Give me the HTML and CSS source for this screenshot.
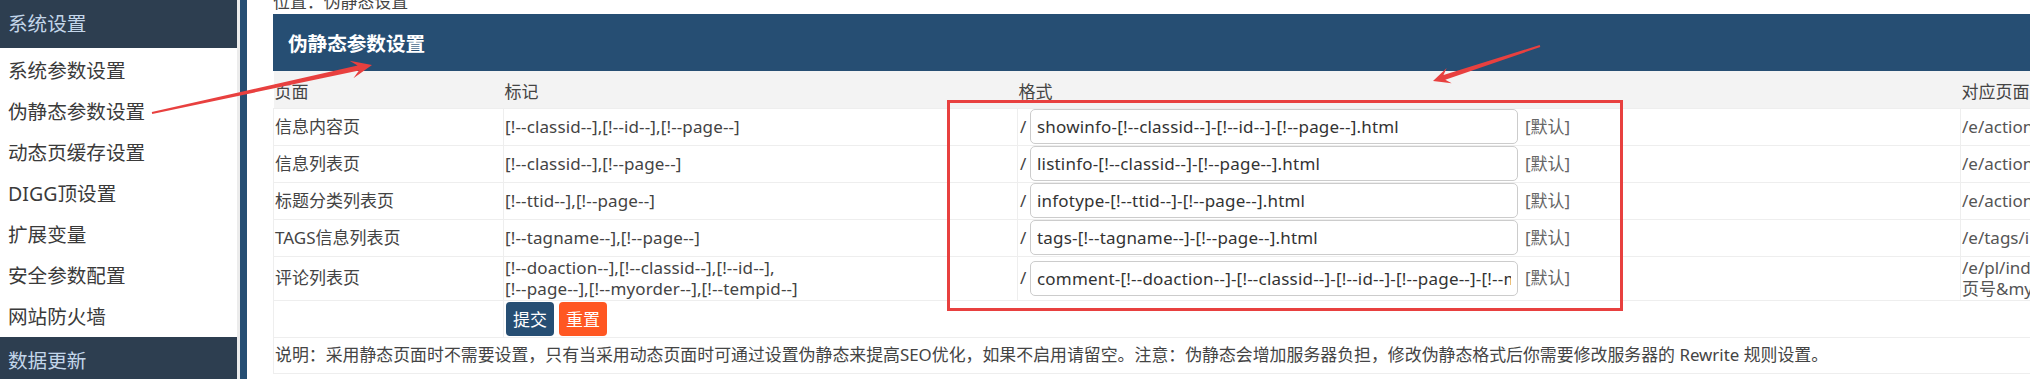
FILE: index.html
```html
<!DOCTYPE html>
<html lang="zh-CN">
<head>
<meta charset="utf-8">
<title>伪静态参数设置</title>
<link rel="stylesheet" href="styles.css">
</head>
<body>
<div class="layout">
  <aside class="sidebar">
    <div class="side-head">系统设置</div>
    <ul class="side-menu">
      <li>系统参数设置</li>
      <li>伪静态参数设置</li>
      <li>动态页缓存设置</li>
      <li>DIGG顶设置</li>
      <li>扩展变量</li>
      <li>安全参数配置</li>
      <li>网站防火墙</li>
    </ul>
    <div class="side-head">数据更新</div>
  </aside>
  <div class="gutter"></div>
  <div class="splitbar"></div>
  <main class="main">
    <div class="crumb">位置：伪静态设置</div>
    <div class="panel-head">伪静态参数设置</div>
    <table class="grid">
      <colgroup>
        <col class="c-page">
        <col class="c-tag">
        <col class="c-fmt">
        <col class="c-url">
      </colgroup>
      <thead>
        <tr><th>页面</th><th>标记</th><th>格式</th><th>对应页面</th></tr>
      </thead>
      <tbody>
        <tr>
          <td>信息内容页</td>
          <td class="tags">[!--classid--],[!--id--],[!--page--]</td>
          <td><div class="fmt-line"><span class="slash">/</span><input class="fmt" type="text" value="showinfo-[!--classid--]-[!--id--]-[!--page--].html"><span class="def">[默认]</span></div></td>
          <td class="url">/e/action/ShowInfo.php?classid=栏目ID&amp;id=信息ID&amp;page=分页号</td>
        </tr>
        <tr>
          <td>信息列表页</td>
          <td class="tags">[!--classid--],[!--page--]</td>
          <td><div class="fmt-line"><span class="slash">/</span><input class="fmt" type="text" value="listinfo-[!--classid--]-[!--page--].html"><span class="def">[默认]</span></div></td>
          <td class="url">/e/action/ListInfo/index.php?classid=栏目ID&amp;page=分页号</td>
        </tr>
        <tr>
          <td>标题分类列表页</td>
          <td class="tags">[!--ttid--],[!--page--]</td>
          <td><div class="fmt-line"><span class="slash">/</span><input class="fmt" type="text" value="infotype-[!--ttid--]-[!--page--].html"><span class="def">[默认]</span></div></td>
          <td class="url">/e/action/InfoType.php?ttid=标题分类ID&amp;page=分页号</td>
        </tr>
        <tr>
          <td>TAGS信息列表页</td>
          <td class="tags">[!--tagname--],[!--page--]</td>
          <td><div class="fmt-line"><span class="slash">/</span><input class="fmt" type="text" value="tags-[!--tagname--]-[!--page--].html"><span class="def">[默认]</span></div></td>
          <td class="url">/e/tags/index.php?tagname=TAGS名称&amp;page=分页号</td>
        </tr>
        <tr class="tall">
          <td>评论列表页</td>
          <td class="tags">[!--doaction--],[!--classid--],[!--id--],<br>[!--page--],[!--myorder--],[!--tempid--]</td>
          <td><div class="fmt-line"><span class="slash">/</span><input class="fmt" type="text" value="comment-[!--doaction--]-[!--classid--]-[!--id--]-[!--page--]-[!--myorder--]-[!--tempid--].html"><span class="def">[默认]</span></div></td>
          <td class="url">/e/pl/index.php?doaction=事件&amp;classid=栏目ID&amp;id=信息ID&amp;page=分<br>页号&amp;myorder=排序&amp;tempid=评论模板ID</td>
        </tr>
        <tr class="actions">
          <td></td>
          <td colspan="3"><div class="btn-line"><button class="btn btn-submit" type="button">提交</button><button class="btn btn-reset" type="button">重置</button></div></td>
        </tr>
        <tr class="note">
          <td colspan="4">说明：采用静态页面时不需要设置，只有当采用动态页面时可通过设置伪静态来提高SEO优化，如果不启用请留空。注意：伪静态会增加服务器负担，修改伪静态格式后你需要修改服务器的 Rewrite 规则设置。</td>
        </tr>
      </tbody>
    </table>
  </main>
</div>
<svg class="annot" width="2030" height="379" viewBox="0 0 2030 379">
  <rect x="948.5" y="101.5" width="673" height="208" fill="none" stroke="#e8403f" stroke-width="3"/>
  <polygon fill="#e8403f" points="151.8,112 357.6,65.5 349.6,60.7 372,65 353.4,78.3 359,70.5 152.2,114"/>
  <polygon fill="#e8403f" points="1539.7,45 1443.5,75 1446.7,68.1 1433,81 1451.7,83.3 1445.3,79.7 1540.3,47"/>
</svg>
</body>
</html>
```
FILE: styles.css
```css
html, body {
  margin: 0;
  padding: 0;
}
body {
  width: 2030px;
  height: 379px;
  overflow: hidden;
  position: relative;
  background: #fff;
  font-family: "Noto Sans", "Noto Sans CJK SC", sans-serif;
  color: #444;
}
.layout {
  display: flex;
  height: 379px;
}
.sidebar {
  flex: none;
  width: 237px;
  background: #fff;
}
.side-head {
  height: 48px;
  line-height: 48px;
  padding-left: 8px;
  background: #2d3e50;
  color: #c3d6ea;
  font-size: 19.6px;
}
.side-menu {
  list-style: none;
  margin: 0;
  padding: 2px 0 0;
}
.side-menu li {
  height: 41px;
  line-height: 41px;
  padding-left: 8px;
  font-size: 19.6px;
  color: #3a3a3a;
}
.gutter {
  flex: none;
  width: 3px;
  background: #ececec;
}
.splitbar {
  flex: none;
  width: 7px;
  background: #264e73;
}
.main {
  flex: none;
  width: 2420px;
  padding-left: 26px;
}
.crumb {
  height: 24px;
  line-height: 24px;
  margin-top: -10px;
  font-size: 16.9px;
  color: #444;
}
.panel-head {
  height: 57px;
  line-height: 60px;
  padding-left: 15px;
  background: #264e73;
  color: #fff;
  font-size: 19.6px;
  font-weight: bold;
}
.grid {
  border-collapse: collapse;
  table-layout: fixed;
  width: 2387px;
  font-size: 17px;
  color: #444;
}
.c-page { width: 230px; }
.c-tag { width: 514px; }
.c-fmt { width: 943px; }
.c-url { width: 700px; }
.grid th {
  height: 33.5px;
  padding: 3px 1px 0;
  background: #f3f3f3;
  font-weight: normal;
  text-align: left;
  color: #444;
}
.grid td {
  height: 36px;
  padding: 0 1px;
  border: 1px solid #eee;
  line-height: 22px;
  white-space: nowrap;
  vertical-align: middle;
}
.grid tr.tall td {
  height: 43px;
  line-height: 21.5px;
}
.grid td.tags {
  letter-spacing: 0.13px;
}
.grid td.url {
  color: #555;
  overflow: hidden;
}
.fmt-line {
  display: flex;
  align-items: center;
  height: 35px;
}
.slash {
  flex: none;
  width: 10px;
  padding-left: 1px;
}
.fmt {
  flex: none;
  box-sizing: border-box;
  width: 488px;
  height: 35px;
  padding: 0 6px;
  border: 1px solid #ccc;
  border-radius: 5px;
  font-family: "Noto Sans", "Noto Sans CJK SC", sans-serif;
  font-size: 17px;
  letter-spacing: 0.2px;
  color: #333;
  background: #fff;
}
.def {
  margin-left: 7px;
  color: #666;
}
.grid tr.actions td {
  height: 36px;
  border-bottom: none;
}
.grid tr.actions td + td {
  border-right: none;
}
.btn-line {
  display: flex;
  align-items: center;
  gap: 5px;
  padding-left: 1px;
}
.btn {
  height: 34px;
  padding: 0 7px;
  border: none;
  border-radius: 4px;
  color: #fff;
  font-family: "Noto Sans", "Noto Sans CJK SC", sans-serif;
  font-size: 17px;
}
.btn-submit {
  background: #264e73;
}
.btn-reset {
  background: #ff5722;
}
.grid tr.note td {
  height: 35px;
  border-right: none;
  font-size: 16.9px;
}
.annot {
  position: absolute;
  left: 0;
  top: 0;
  pointer-events: none;
}
```
